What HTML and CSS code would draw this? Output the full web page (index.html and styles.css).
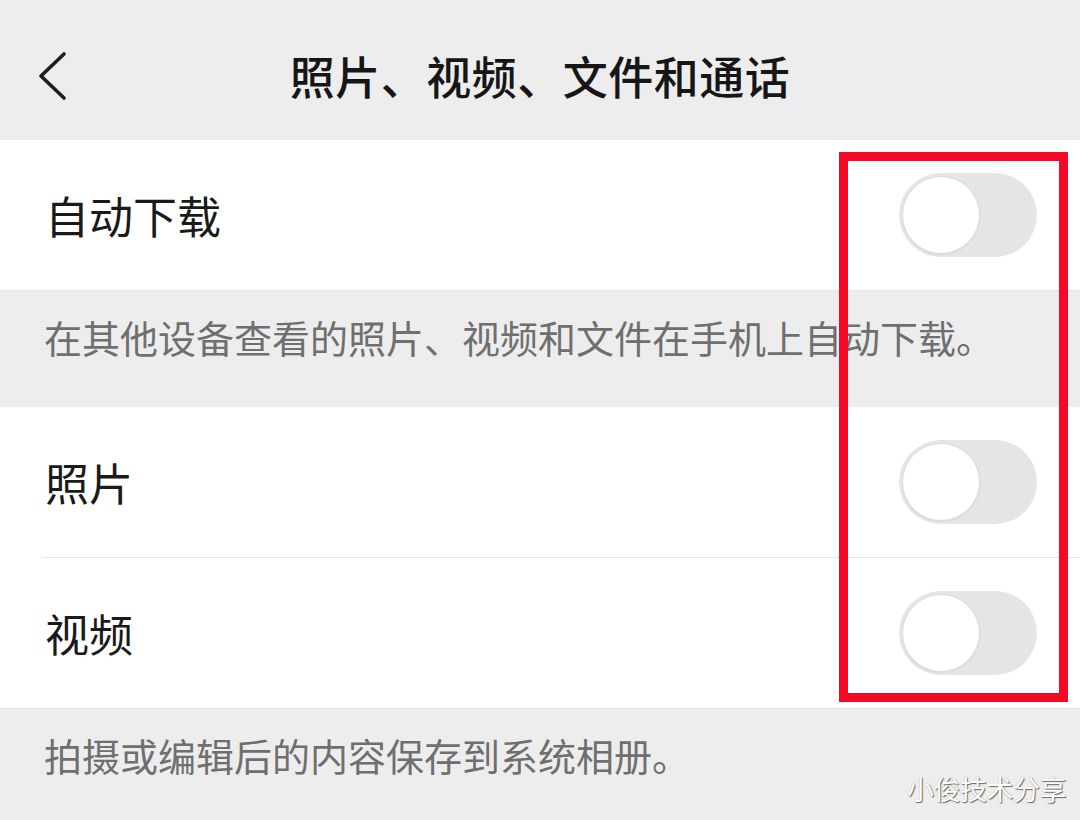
FILE: index.html
```html
<!DOCTYPE html>
<html lang="zh">
<head>
<meta charset="utf-8">
<title>照片、视频、文件和通话</title>
<link rel="stylesheet" href="styles.css">
</head>
<body>
<div class="screen">
  <header class="topbar">
    <div class="back">
      <svg width="34" height="50" viewBox="0 0 34 50"><polyline points="27,3 4,25 27,47" fill="none" stroke="#1e1e1e" stroke-width="3.6" stroke-linecap="round" stroke-linejoin="round"/></svg>
    </div>
    <h1 class="title">照片、视频、文件和通话</h1>
    <div></div>
  </header>

  <section class="group">
    <div class="row">
      <span class="label">自动下载</span>
      <span class="switch"><span class="knob"></span></span>
    </div>
  </section>
  <p class="note">在其他设备查看的照片、视频和文件在手机上自动下载。</p>

  <section class="group">
    <div class="row divided">
      <span class="label">照片</span>
      <span class="switch"><span class="knob"></span></span>
    </div>
    <div class="row">
      <span class="label">视频</span>
      <span class="switch"><span class="knob"></span></span>
    </div>
  </section>
  <p class="note">拍摄或编辑后的内容保存到系统相册。</p>

  <div class="highlight"></div>
  <div class="watermark">小俊技术分享</div>
</div>
</body>
</html>
```

FILE: styles.css
```css
html, body {
  margin: 0;
  padding: 0;
}
body {
  background: #ededed;
  font-family: "Noto Sans CJK SC", "Noto Sans", sans-serif;
  color: #1b1b1b;
}
.screen {
  position: relative;
  width: 1080px;
  height: 820px;
  overflow: hidden;
  background: #ededed;
}
.topbar {
  height: 128px;
  padding-top: 12px;
  display: grid;
  grid-template-columns: 1fr auto 1fr;
  align-items: center;
  box-sizing: content-box;
}
.back {
  padding-left: 37px;
  display: flex;
  align-items: center;
}
.back svg { display: block; }
.title {
  margin: 0;
  font-size: 45px;
  font-weight: 500;
  letter-spacing: 0.5px;
  color: #161616;
  line-height: 1.2;
}
.group {
  background: #ffffff;
  border-bottom: 1px solid #e3e3e3;
}
.row {
  height: 150px;
  display: flex;
  align-items: center;
  justify-content: space-between;
  padding: 0 43px 0 45px;
  position: relative;
}
.row.divided::after {
  content: "";
  position: absolute;
  left: 42px;
  right: 0;
  bottom: -1px;
  height: 1px;
  background: #e6e6e6;
}
.row.divided { margin-bottom: 1px; }
.label {
  font-size: 44px;
  line-height: 1.2;
  color: #1a1a1a;
  padding-top: 0;
}
.switch {
  width: 138px;
  height: 84px;
  border-radius: 42px;
  background: #e5e5e5;
  display: flex;
  align-items: center;
  padding-left: 3px;
  box-sizing: border-box;
}
.knob {
  width: 76px;
  height: 76px;
  border-radius: 50%;
  background: #ffffff;
  border: 1px solid #dcdcdc;
  box-shadow: 0 1px 2px rgba(0,0,0,0.06);
}
.note {
  margin: 0;
  padding: 22px 44px 46px;
  font-size: 38px;
  line-height: 48px;
  color: #6f6f6f;
}
.highlight {
  position: absolute;
  left: 839px;
  top: 152px;
  width: 229px;
  height: 550px;
  box-sizing: border-box;
  border: 9px solid #f40a24;
}
.watermark {
  position: absolute;
  right: 14px;
  bottom: 12px;
  font-size: 27px;
  color: #ffffff;
  text-shadow: 1px 1px 1px rgba(0,0,0,0.55), 0 0 1px rgba(0,0,0,0.3);
  letter-spacing: -0.5px;
}
```
